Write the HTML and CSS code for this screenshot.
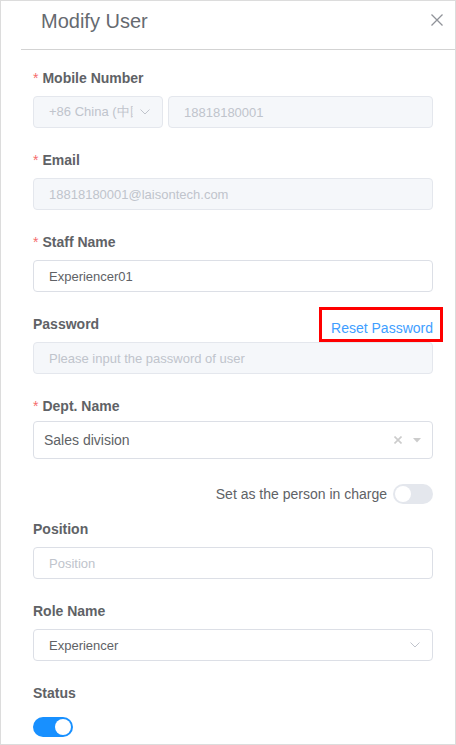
FILE: index.html
```html
<!doctype html>
<html lang="en">
  <head>
    <meta charset="utf-8" />
    <title>Modify User</title>
    <meta name="viewport" content="width=device-width, initial-scale=1" />
    <link rel="stylesheet" href="styles.css">
  </head>
  <body>
    <div class="drawer">
      <div class="drawer-header">
        <span class="drawer-title">Modify User</span>
        <button class="close-btn" type="button" aria-label="Close">
          <svg width="12" height="12" viewBox="0 0 12 12">
            <path d="M0.5 0.5 L11.5 11.5 M11.5 0.5 L0.5 11.5" stroke="#909399" stroke-width="1.3" fill="none" />
          </svg>
        </button>
      </div>
      <form class="user-form">
        <div class="form-item">
          <label class="form-label is-required">Mobile Number</label>
          <div class="phone-row">
            <div class="select is-disabled country-select">
              <span class="select-text">+86 China (中国)</span>
              <svg class="chevron" width="10" height="6" viewBox="0 0 10 6">
                <path d="M0.5 0.5 L5 5 L9.5 0.5" stroke="#c0c4cc" stroke-width="1" fill="none" />
              </svg>
            </div>
            <input class="input" value="18818180001" disabled />
          </div>
        </div>
        <div class="form-item">
          <label class="form-label is-required">Email</label>
          <input class="input" value="18818180001@laisontech.com" disabled />
        </div>
        <div class="form-item">
          <label class="form-label is-required">Staff Name</label>
          <input class="input" value="Experiencer01" />
        </div>
        <div class="form-item">
          <div class="label-row">
            <label class="form-label">Password</label>
            <a class="reset-link">Reset Password</a>
          </div>
          <input class="input" placeholder="Please input the password of user" disabled />
        </div>
        <div class="form-item">
          <label class="form-label is-required">Dept. Name</label>
          <div class="tree-select">
            <span class="tree-value">Sales division</span>
            <svg class="tree-clear" width="8" height="8" viewBox="0 0 8 8">
              <path d="M0.5 0.5 L7.5 7.5 M7.5 0.5 L0.5 7.5" stroke="#cccccc" stroke-width="1.6" fill="none" />
            </svg>
            <svg class="tree-caret" width="8" height="5" viewBox="0 0 8 5">
              <path d="M0 0 L8 0 L4 4.5 Z" fill="#cccccc" />
            </svg>
          </div>
        </div>
        <div class="charge-row">
          <span>Set as the person in charge</span>
          <span class="switch"><span class="switch-knob"></span></span>
        </div>
        <div class="form-item">
          <label class="form-label">Position</label>
          <input class="input" placeholder="Position" />
        </div>
        <div class="form-item">
          <label class="form-label">Role Name</label>
          <div class="select">
            <span class="select-text">Experiencer</span>
            <svg class="chevron" width="10" height="6" viewBox="0 0 10 6">
              <path d="M0.5 0.5 L5 5 L9.5 0.5" stroke="#c0c4cc" stroke-width="1" fill="none" />
            </svg>
          </div>
        </div>
        <div class="form-item">
          <label class="form-label">Status</label>
          <div class="switch-line">
            <span class="switch is-on"><span class="switch-knob"></span></span>
          </div>
        </div>
      </form>
    </div>
  </body>
</html>
```

FILE: styles.css
```css
* {
  box-sizing: border-box;
}
body {
  margin: 0;
  background: #fff;
  font-family: "Liberation Sans", Arial, sans-serif;
  color: #606266;
}
.drawer {
  width: 456px;
  height: 745px;
  border: 1px solid #dcdcdc;
  padding-left: 20px;
  overflow: hidden;
}
.drawer-header {
  height: 49px;
  border-bottom: 1px solid #d3d3d3;
  display: flex;
  justify-content: space-between;
  align-items: flex-start;
  padding: 8px 12px 0 20px;
}
.drawer-title {
  font-size: 20px;
  line-height: 24px;
  color: #666a70;
}
.close-btn {
  border: 0;
  background: none;
  padding: 0;
  width: 12px;
  height: 24px;
  margin-top: -1px;
  display: flex;
  align-items: center;
}
.user-form {
  padding: 10px 22px 0 12px;
}
.form-item {
  margin-bottom: 14px;
}
.form-label {
  display: block;
  font-size: 14px;
  font-weight: bold;
  line-height: 36px;
  color: #606266;
}
.is-required::before {
  content: "*";
  color: #f56c6c;
  font-weight: normal;
  margin-right: 4px;
}
.label-row {
  display: flex;
  justify-content: space-between;
  align-items: flex-start;
}
.reset-link {
  position: relative;
  margin-top: 12px;
  font-size: 14px;
  line-height: 20px;
  color: #409eff;
}
.reset-link::after {
  content: "";
  position: absolute;
  left: -12px;
  right: -10px;
  top: -11px;
  bottom: -4px;
  border: 3px solid #ff0000;
}
.input {
  display: block;
  width: 100%;
  height: 32px;
  border: 1px solid #dcdfe6;
  border-radius: 4px;
  padding: 0 15px;
  font: 13px "Liberation Sans", Arial, sans-serif;
  color: #606266;
  background: #fff;
  outline: none;
}
.input:disabled {
  background: #f5f7fa;
  border-color: #e4e7ed;
  color: #c0c4cc;
  -webkit-text-fill-color: #c0c4cc;
}
.input::placeholder {
  color: #c0c4cc;
  -webkit-text-fill-color: #c0c4cc;
}
.phone-row {
  display: flex;
  gap: 5px;
}
.select {
  display: flex;
  align-items: center;
  height: 32px;
  border: 1px solid #dcdfe6;
  border-radius: 4px;
  padding: 0 12px 0 15px;
  font-size: 13px;
  color: #606266;
}
.select.is-disabled {
  background: #f5f7fa;
  border-color: #e4e7ed;
  color: #c0c4cc;
}
.select-text {
  flex: 1;
  white-space: nowrap;
  overflow: hidden;
  margin-right: 7px;
}
.country-select {
  width: 130px;
  flex: none;
}
.tree-select {
  display: flex;
  align-items: center;
  height: 38px;
  margin-top: -3px;
  border: 1px solid #dcdfe6;
  border-radius: 4px;
  padding: 0 11px 0 10px;
  font-size: 14px;
  color: #606266;
}
.tree-value {
  flex: 1;
}
.tree-clear {
  margin-right: 11px;
}
.charge-row {
  display: flex;
  justify-content: flex-end;
  align-items: center;
  gap: 6px;
  height: 34px;
  margin-top: 18px;
  font-size: 14px;
  color: #606266;
}
.switch {
  display: flex;
  width: 40px;
  height: 20px;
  padding: 2px;
  border-radius: 10px;
  background: #e4e7ed;
}
.switch-knob {
  width: 16px;
  height: 16px;
  border-radius: 50%;
  background: #fff;
}
.switch.is-on {
  background: #1890ff;
  justify-content: flex-end;
}
.switch-line {
  height: 32px;
  display: flex;
  align-items: center;
}
```
